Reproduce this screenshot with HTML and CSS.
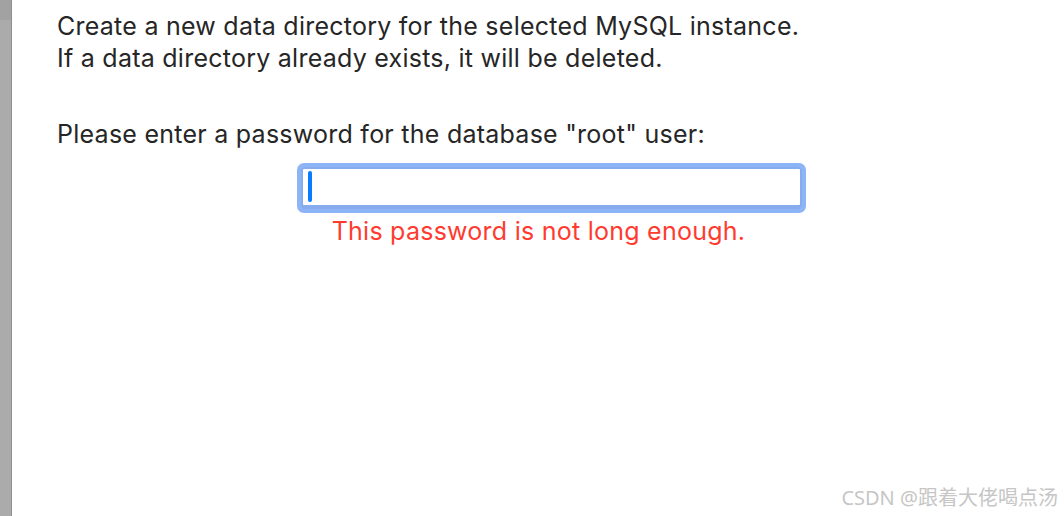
FILE: index.html
```html
<!DOCTYPE html>
<html>
<head>
<meta charset="utf-8">
<link rel="stylesheet" href="styles.css">
</head>
<body>
<div class="window">
  <div class="sidebar"><div class="sidebar-top"></div></div>
  <div class="content">
    <p class="intro">Create a new data directory for the selected MySQL instance.<br>If a data directory already exists, it will be deleted.</p>
    <p class="prompt">Please enter a password for the database "root" user:</p>
    <div class="field-wrap">
      <div class="field"><span class="caret"></span></div>
      <div class="error">This password is not long enough.</div>
    </div>
  </div>
  <div class="watermark">CSDN @跟着大佬喝点汤</div>
</div>
</body>
</html>
```
FILE: styles.css
```css
html, body {
  margin: 0;
  padding: 0;
  background: #ffffff;
}
.window {
  position: relative;
  width: 1064px;
  height: 516px;
  display: flex;
  overflow: hidden;
  font-family: Inter, "Noto Sans", sans-serif;
  color: #262626;
}
.sidebar {
  width: 11px;
  flex: none;
  background: #ababab;
  border-right: 1px solid #8f8f8f;
}
.sidebar-top {
  height: 20px;
  background: #a2a2a2;
}
.content {
  flex: 1;
  padding-left: 45px;
  padding-top: 10px;
}
.intro {
  margin: 0;
  font-size: 25px;
  line-height: 32px;
  letter-spacing: 0.25px;
}
.prompt {
  margin: 44px 0 0;
  font-size: 25px;
  line-height: 32px;
  letter-spacing: 0.25px;
}
.field-wrap {
  margin-left: 240px;
  margin-top: 13px;
  width: 509px;
}
.field {
  box-sizing: border-box;
  height: 50px;
  border: 4px solid #8cb4f7;
  border-radius: 7px;
  box-shadow: inset 0 0 0 2px #86acee, inset 0 -2px 0 2px #86acee;
  background: #fff;
  padding: 4px 0 0 7px;
}
.caret {
  display: block;
  width: 4px;
  height: 31px;
  border-radius: 2px;
  background: #0a7aff;
}
.error {
  text-align: center;
  color: #ff3b30;
  font-size: 25px;
  line-height: 32px;
  letter-spacing: 0.25px;
  margin-top: 2px;
  padding-right: 26px;
}
.watermark {
  position: absolute;
  right: 6px;
  bottom: 5px;
  font-family: "Noto Sans", "Noto Sans CJK SC", sans-serif;
  font-size: 20px;
  color: #c6c6c6;
}
```
